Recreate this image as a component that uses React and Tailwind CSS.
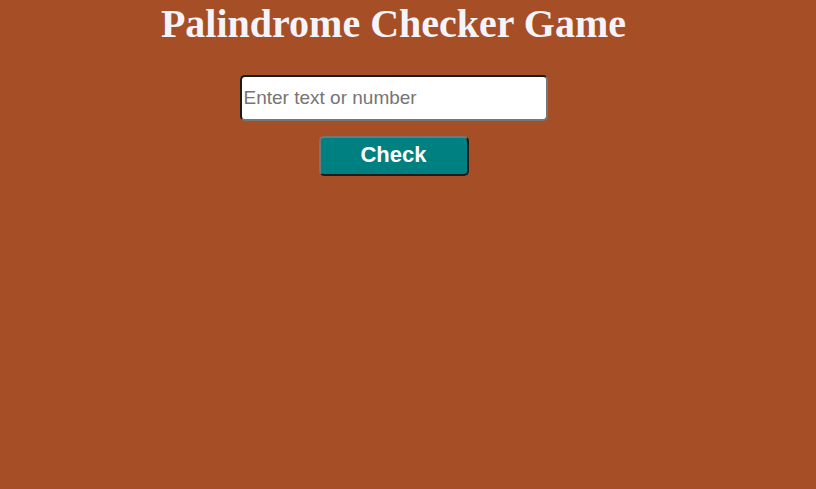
import React, { useState } from 'react';

const App = () => {
  const [text, setText] = useState('');

  return (
    <div className="min-h-[489px] bg-[#a64f27]">
      <div className="w-[787px] flex flex-col items-center">
        <h1 className="mt-[1px] text-[40px] font-bold leading-[46px] text-[#f4f4fa] font-['Liberation_Serif',serif]">
          Palindrome Checker Game
        </h1>
        <input
          type="text"
          value={text}
          onChange={(e) => setText(e.target.value)}
          placeholder="Enter text or number"
          className="mt-[28px] w-[308px] h-[46px] bg-white rounded-[5px] border-2 border-t-[#1b1b1b] border-l-[#1b1b1b] border-r-[#767676] border-b-[#767676] px-[2px] text-[19px] text-black placeholder:text-[#757575] font-['Liberation_Sans',sans-serif] outline-none"
        />
        <button
          type="button"
          className="mt-[15px] w-[150px] h-[40px] bg-[#008080] rounded-[5px] border-2 border-t-[#767676] border-l-[#767676] border-r-[#1b1b1b] border-b-[#1b1b1b] pb-[2px] text-[22px] leading-[24px] font-bold text-white font-['Liberation_Sans',sans-serif]"
        >
          Check
        </button>
      </div>
    </div>
  );
};

export default App;
